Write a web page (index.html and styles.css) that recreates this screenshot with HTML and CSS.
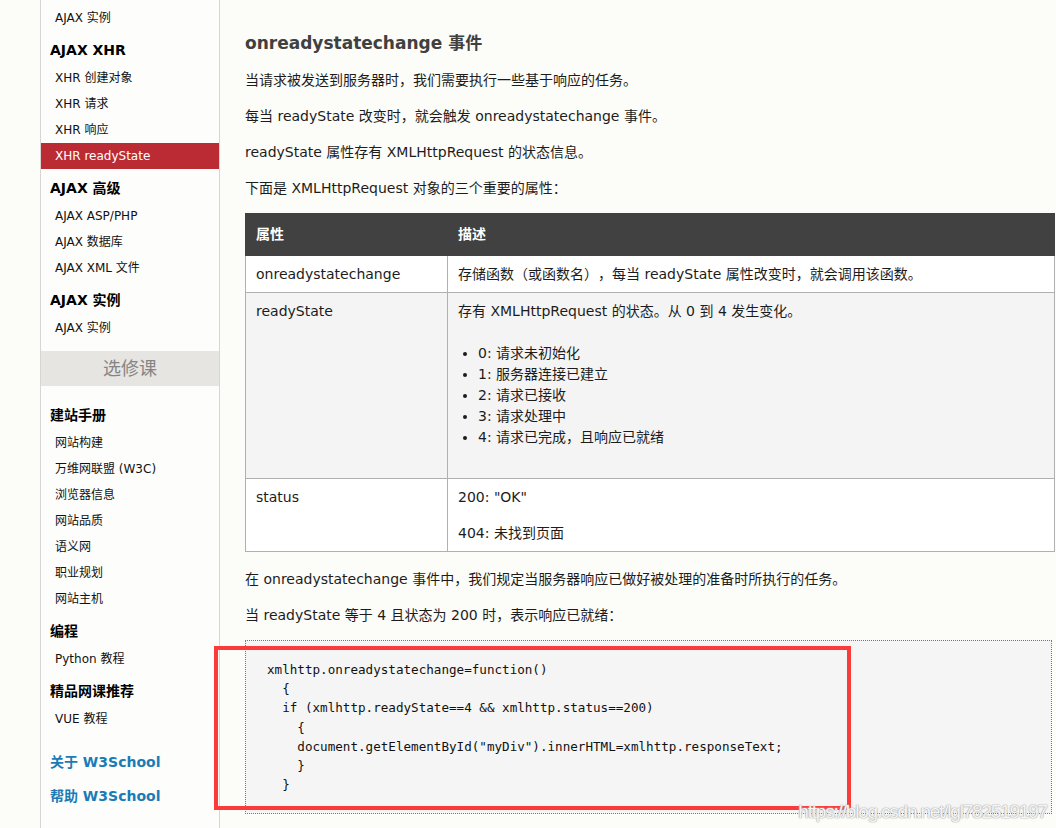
FILE: index.html
```html
<!DOCTYPE html>
<html lang="zh-CN">
<head>
<meta charset="utf-8">
<title>AJAX - onreadystatechange 事件</title>
<link rel="stylesheet" href="styles.css">
</head>
<body>
<div class="page">
  <div class="gutter"></div>
  <nav class="sidebar">
    <a class="item" href="#">AJAX 实例</a>
    <h3 class="nav-head">AJAX XHR</h3>
    <a class="item" href="#">XHR 创建对象</a>
    <a class="item" href="#">XHR 请求</a>
    <a class="item" href="#">XHR 响应</a>
    <a class="item active" href="#">XHR readyState</a>
    <h3 class="nav-head">AJAX 高级</h3>
    <a class="item" href="#">AJAX ASP/PHP</a>
    <a class="item" href="#">AJAX 数据库</a>
    <a class="item" href="#">AJAX XML 文件</a>
    <h3 class="nav-head">AJAX 实例</h3>
    <a class="item" href="#">AJAX 实例</a>
    <div class="elective">选修课</div>
    <h3 class="nav-head first">建站手册</h3>
    <a class="item" href="#">网站构建</a>
    <a class="item" href="#">万维网联盟 (W3C)</a>
    <a class="item" href="#">浏览器信息</a>
    <a class="item" href="#">网站品质</a>
    <a class="item" href="#">语义网</a>
    <a class="item" href="#">职业规划</a>
    <a class="item" href="#">网站主机</a>
    <h3 class="nav-head">编程</h3>
    <a class="item" href="#">Python 教程</a>
    <h3 class="nav-head">精品网课推荐</h3>
    <a class="item" href="#">VUE 教程</a>
    <a class="about" href="#">关于 W3School</a>
    <a class="about second" href="#">帮助 W3School</a>
  </nav>
  <main class="main">
    <h2 class="title">onreadystatechange 事件</h2>
    <p>当请求被发送到服务器时，我们需要执行一些基于响应的任务。</p>
    <p>每当 readyState 改变时，就会触发 onreadystatechange 事件。</p>
    <p>readyState 属性存有 XMLHttpRequest 的状态信息。</p>
    <p>下面是 XMLHttpRequest 对象的三个重要的属性：</p>
    <table class="props">
      <thead>
        <tr><th class="col1">属性</th><th>描述</th></tr>
      </thead>
      <tbody>
        <tr>
          <td>onreadystatechange</td>
          <td>存储函数（或函数名），每当 readyState 属性改变时，就会调用该函数。</td>
        </tr>
        <tr class="alt">
          <td>readyState</td>
          <td>存有 XMLHttpRequest 的状态。从 0 到 4 发生变化。
            <ul>
              <li>0: 请求未初始化</li>
              <li>1: 服务器连接已建立</li>
              <li>2: 请求已接收</li>
              <li>3: 请求处理中</li>
              <li>4: 请求已完成，且响应已就绪</li>
            </ul>
          </td>
        </tr>
        <tr>
          <td>status</td>
          <td><p class="cellp">200: "OK"</p><p class="cellp last">404: 未找到页面</p></td>
        </tr>
      </tbody>
    </table>
    <p>在 onreadystatechange 事件中，我们规定当服务器响应已做好被处理的准备时所执行的任务。</p>
    <p>当 readyState 等于 4 且状态为 200 时，表示响应已就绪：</p>
    <div class="code">
<pre>xmlhttp.onreadystatechange=function()
  {
  if (xmlhttp.readyState==4 &amp;&amp; xmlhttp.status==200)
    {
    document.getElementById("myDiv").innerHTML=xmlhttp.responseText;
    }
  }</pre>
      <div class="highlight"></div>
      <div class="watermark">https://blog.csdn.net/lgl782519197</div>
    </div>
  </main>
</div>
</body>
</html>
```
FILE: styles.css
```css
html, body {
  margin: 0;
  padding: 0;
  background: #fcfcf8;
  overflow: hidden;
}
body {
  font-family: "DejaVu Sans", "Noto Sans CJK SC", sans-serif;
  color: #1c1c1c;
  text-spacing-trim: space-all;
}
.page {
  display: flex;
  height: 828px;
  overflow: hidden;
}
.gutter {
  width: 40px;
  flex: none;
}
.sidebar {
  width: 178px;
  flex: none;
  border-left: 1px solid #d6d6d4;
  border-right: 1px solid #d6d6d4;
  background: #fdfdfb;
  padding-top: 5px;
  display: flex;
  flex-direction: column;
}
.item {
  display: block;
  height: 26px;
  line-height: 26px;
  padding-left: 14px;
  font-size: 12px;
  color: #111;
  text-decoration: none;
}
.item.active {
  background: #bb2b34;
  color: #fff;
}
.nav-head {
  margin: 9px 0 5px;
  padding-left: 9px;
  font-size: 14px;
  line-height: 20px;
  font-weight: bold;
  color: #000;
}
.nav-head.first {
  margin-top: 19px;
}
.elective {
  margin-top: 10px;
  height: 35px;
  line-height: 35px;
  background: #e6e5e2;
  color: #858585;
  text-align: center;
  font-size: 18px;
}
.about {
  display: block;
  margin-top: 20px;
  padding-left: 9px;
  line-height: 20px;
  font-size: 14px;
  font-weight: bold;
  color: #1b7bb6;
  text-decoration: none;
}
.about.second {
  margin-top: 14px;
}
.main {
  width: 810px;
  padding-left: 25px;
  flex: none;
  font-size: 14px;
}
.title {
  margin: 30px 0 13px;
  font-size: 17px;
  line-height: 26px;
  font-weight: bold;
  color: #404040;
}
.main p {
  margin: 0 0 14px;
  line-height: 22px;
}
.props {
  width: 810px;
  border-collapse: collapse;
  margin-bottom: 16px;
  font-size: 14px;
}
.props th {
  background: #414141;
  color: #fff;
  text-align: left;
  font-weight: bold;
  padding: 10px 10px;
  line-height: 21px;
  border: 1px solid #414141;
}
.props th.col1 {
  width: 181px;
}
.props td {
  background: #fff;
  border: 1px solid #b0b0b0;
  padding: 8px 10px;
  line-height: 20px;
  vertical-align: top;
}
.props tr.alt td {
  background: #f4f4f4;
}
.props ul {
  margin: 22px 0;
  padding-left: 20px;
}
.props li {
  line-height: 21px;
}
.main p.cellp {
  margin: 0 0 16px;
  line-height: 20px;
}
.main p.cellp.last {
  margin-bottom: 0;
}
.code {
  position: relative;
  width: 805px;
  background: #f5f5f5;
  border: 1px dotted #7a7a5c;
}
.code pre {
  margin: 0;
  padding: 19px 21px 19px;
  font-family: "DejaVu Sans Mono", monospace;
  font-size: 12.6px;
  line-height: 19.2px;
  color: #111;
}
.highlight {
  position: absolute;
  left: -32px;
  top: 5px;
  width: 637px;
  height: 164px;
  box-sizing: border-box;
  border: 4px solid #fb3a3a;
}
.watermark {
  position: absolute;
  right: 4px;
  bottom: -10px;
  font-family: "Liberation Sans", sans-serif;
  font-size: 19px;
  letter-spacing: -1.2px;
  line-height: 22px;
  color: rgba(255, 255, 255, 0.9);
  text-shadow: 0 0 1px #a8a8a8, 0 0 1px #a8a8a8, 0 0 2px #c8c8c8;
}
```
